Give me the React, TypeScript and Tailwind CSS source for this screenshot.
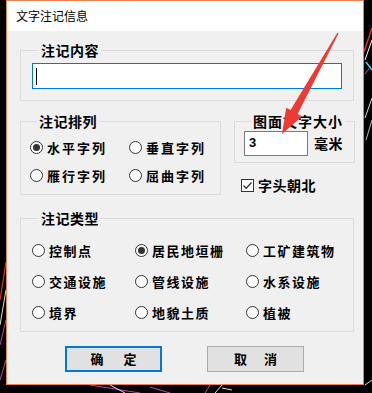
import React from "react";

const FONT = { fontFamily: '"Noto Sans CJK SC", "Noto Sans", sans-serif' };

function Radio({ checked = false }: { checked?: boolean }) {
  return (
    <span className="w-[13px] h-[13px] rounded-full border border-[#333333] bg-white flex items-center justify-center shrink-0">
      {checked && <span className="w-[7px] h-[7px] rounded-full bg-[#333333]" />}
    </span>
  );
}

function Opt({ label, checked = false, track }: { label: string; checked?: boolean; track: string }) {
  return (
    <div className="flex items-center h-full">
      <Radio checked={checked} />
      <span className={`ml-[4px] text-[13px] font-bold leading-none text-black ${track}`}>{label}</span>
    </div>
  );
}

function Legend({ children }: { children: React.ReactNode }) {
  return (
    <legend className="ml-[7px] px-[2px] text-[14px] font-bold leading-[16px] tracking-[0.5px] text-black">
      {children}
    </legend>
  );
}

export default function App() {
  return (
    <div className="relative w-[372px] h-[393px] bg-black overflow-hidden" style={FONT}>
      <svg className="absolute inset-0" width="372" height="393" viewBox="0 0 372 393">
        <line x1="372" y1="28" x2="364" y2="52" stroke="#e03030" strokeWidth="1.5" />
        <line x1="372" y1="40" x2="365" y2="60" stroke="#ffffff" strokeWidth="1" />
        <line x1="366" y1="62" x2="372" y2="70" stroke="#30e0e0" strokeWidth="1.5" />
        <line x1="365" y1="74" x2="371" y2="66" stroke="#d040d0" strokeWidth="1" />
        <line x1="372" y1="98" x2="365" y2="118" stroke="#dddddd" strokeWidth="1" />
        <line x1="372" y1="120" x2="366" y2="140" stroke="#bbbbbb" strokeWidth="1" />
        <line x1="6" y1="262" x2="0" y2="300" stroke="#e03030" strokeWidth="1.2" />
        <line x1="6" y1="290" x2="0" y2="325" stroke="#dddddd" strokeWidth="1" />
        <line x1="6" y1="320" x2="0" y2="345" stroke="#c040c0" strokeWidth="1" />
        <line x1="6" y1="360" x2="0" y2="380" stroke="#c040c0" strokeWidth="1" />
        <line x1="90" y1="385" x2="140" y2="393" stroke="#c040c0" strokeWidth="1" />
        <line x1="110" y1="385" x2="125" y2="393" stroke="#dddddd" strokeWidth="1" />
        <line x1="150" y1="387" x2="170" y2="393" stroke="#c040c0" strokeWidth="1" />
        <line x1="205" y1="393" x2="210" y2="385" stroke="#c040c0" strokeWidth="1" />
        <line x1="215" y1="393" x2="222" y2="385" stroke="#dddddd" strokeWidth="1" />
        <line x1="222" y1="388" x2="232" y2="390" stroke="#dddddd" strokeWidth="1" />
        <line x1="365" y1="385" x2="372" y2="380" stroke="#dddddd" strokeWidth="1" />
      </svg>

      <div className="relative ml-[6px] w-[358px] h-[385px] border border-[#e9824f] bg-[#f0f0f0] flex flex-col">
        <div className="h-[30px] bg-white flex items-center pl-[9px] text-[12px] text-black">文字注记信息</div>

        <div className="pl-[13px] flex flex-col">
          <fieldset className="mt-[11px] w-[334px] border border-[#dcdcdc] pl-[11px] pt-[5px] pb-[11px]">
            <Legend>注记内容</Legend>
            <div className="w-[310px] h-[26px] border border-[#0078d7] bg-white flex items-center pl-[3px]">
              <span className="w-[1px] h-[17px] bg-black" />
            </div>
          </fieldset>

          <div className="mt-[12px] flex gap-[13px] items-start">
            <fieldset className="w-[201px] border border-[#dcdcdc] pl-[9px] pt-[4px] pb-[5px]">
              <Legend>注记排列</Legend>
              <div className="grid grid-cols-[99px_auto] grid-rows-[28px_28px]">
                <Opt label="水平字列" checked track="tracking-[2px]" />
                <Opt label="垂直字列" track="tracking-[2px]" />
                <Opt label="雁行字列" track="tracking-[2px]" />
                <Opt label="屈曲字列" track="tracking-[2px]" />
              </div>
            </fieldset>

            <div className="flex flex-col">
              <fieldset className="w-[121px] border border-[#dcdcdc] pl-[9px] pt-[2px] pb-[6px]">
                <legend className="ml-[7px] px-[2px] text-[14px] font-bold leading-[16px] tracking-[1px] text-black">
                  图面文字大小
                </legend>
                <div className="flex items-center">
                  <div className="w-[64px] h-[25px] border border-[#7a7a7a] bg-white flex items-start pl-[4px] pt-[3px]">
                    <span className="text-[13px] leading-[15px] font-bold text-black" style={{ fontFamily: '"Liberation Sans", sans-serif' }}>3</span>
                  </div>
                  <span className="ml-[6px] text-[14px] font-bold tracking-[0.5px] text-black">毫米</span>
                </div>
              </fieldset>
              <div className="mt-[14px] pl-[7px] flex items-center h-[16px]">
                <span className="w-[13px] h-[13px] border border-[#333333] bg-white flex items-center justify-center">
                  <svg width="11" height="11" viewBox="0 0 11 11">
                    <path d="M1.5 5.5 L4.2 8.2 L9.5 2.5" fill="none" stroke="#333333" strokeWidth="1.3" />
                  </svg>
                </span>
                <span className="ml-[4px] text-[14px] font-bold tracking-[0.5px] text-black leading-none">字头朝北</span>
              </div>
            </div>
          </div>

          <fieldset className="mt-[15px] w-[334px] border border-[#dcdcdc] pl-[11px] pt-[9px] pb-[3px]">
            <Legend>注记类型</Legend>
            <div className="grid grid-cols-[103px_111px_auto] grid-rows-[31px_31px_31px]">
              <Opt label="控制点" track="tracking-[1.5px]" />
              <Opt label="居民地垣栅" checked track="tracking-[1.5px]" />
              <Opt label="工矿建筑物" track="tracking-[1.5px]" />
              <Opt label="交通设施" track="tracking-[1.5px]" />
              <Opt label="管线设施" track="tracking-[1.5px]" />
              <Opt label="水系设施" track="tracking-[1.5px]" />
              <Opt label="境界" track="tracking-[1.5px]" />
              <Opt label="地貌土质" track="tracking-[1.5px]" />
              <Opt label="植被" track="tracking-[1.5px]" />
            </div>
          </fieldset>

          <div className="mt-[14px] pl-[45px] flex gap-[45px]">
            <button className="w-[97px] h-[26px] border-2 border-[#0078d7] bg-[#e1e1e1] flex items-center justify-center gap-[20px] text-[13px] font-bold text-black">
              <span>确</span>
              <span>定</span>
            </button>
            <button className="w-[97px] h-[26px] border border-[#adadad] bg-[#e1e1e1] flex items-center justify-center gap-[17px] text-[13px] font-bold text-black">
              <span>取</span>
              <span>消</span>
            </button>
          </div>
        </div>
      </div>

      <svg className="absolute inset-0 pointer-events-none" width="372" height="393" viewBox="0 0 372 393">
        <polygon
          points="338.6,33.3 297.6,114 302,116.5 282,134 286.2,107.7 290.6,110.1 337.4,32.7"
          fill="#ec3a34"
        />
      </svg>
    </div>
  );
}
